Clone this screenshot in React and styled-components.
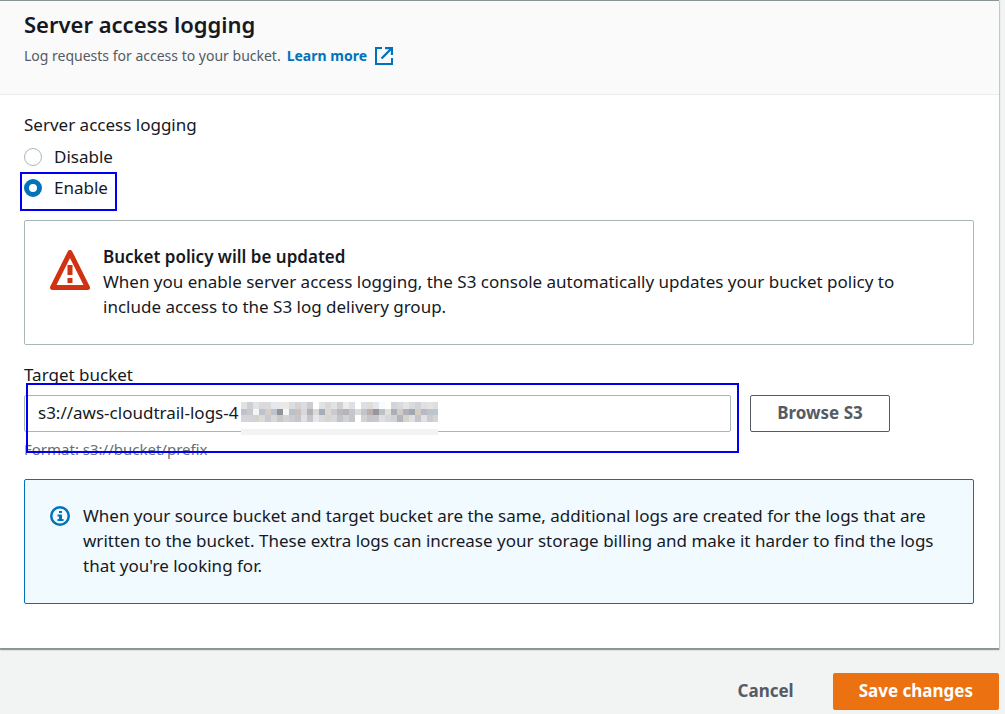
import React, { useState } from 'react';
import styled, { createGlobalStyle, css } from 'styled-components';

const GlobalStyle = createGlobalStyle`
  * {
    box-sizing: border-box;
  }

  body {
    margin: 0;
    background: #f2f3f3;
    color: #16191f;
    font-family: 'Noto Sans', 'Open Sans', sans-serif;
    font-size: 17px;
    line-height: 25px;
  }
`;

const Page = styled.form`
  padding-right: 6px;
`;

const Panel = styled.section`
  background: #fff;
  border-top: 1px solid #879596;
  border-bottom: 1px solid #879596;
  box-shadow: 0 1px 1px 0 rgba(0, 28, 36, 0.3), 1px 1px 1px 0 rgba(0, 28, 36, 0.15);
`;

const PanelHeader = styled.header`
  padding: 7px 24px 27px;
  background: #fafafa;
  border-bottom: 1px solid #eaeded;
`;

const Title = styled.h2`
  margin: 0;
  font-size: 22px;
  font-weight: 600;
  line-height: 32px;
`;

const Description = styled.p`
  display: flex;
  align-items: center;
  gap: 6px;
  margin: 5px 0 0;
  color: #545b64;
  font-size: 14px;
  line-height: 22px;
`;

const LearnMore = styled.a`
  display: inline-flex;
  align-items: center;
  gap: 8px;
  color: #0073bb;
  font-weight: 700;
  text-decoration: none;
`;

const PanelBody = styled.div`
  padding: 17px 25px 44px 24px;
`;

const RadioGroup = styled.fieldset`
  display: flex;
  flex-direction: column;
  align-items: flex-start;
  gap: 6px;
  margin: 0;
  padding: 0;
  border: 0;
`;

const Legend = styled.legend`
  margin-bottom: 7px;
  padding: 0;
`;

/* annotation rectangle drawn over a control */
const highlight = css`
  position: relative;

  &::after {
    content: '';
    position: absolute;
    inset: ${(props) => props.$inset};
    border: 2px solid #0000f0;
    pointer-events: none;
  }
`;

const RadioLabel = styled.label`
  display: flex;
  align-items: center;
  gap: 12px;
  ${(props) => props.$inset && highlight}
`;

const Radio = styled.input`
  appearance: none;
  width: 18px;
  height: 18px;
  margin: 1px 0 0;
  background: #fff;
  border: 1px solid #aab7b8;
  border-radius: 50%;

  &:checked {
    border: 5px solid #0073bb;
  }
`;

const Alert = styled.div`
  display: flex;
  align-items: flex-start;
  gap: 13px;
  margin-top: 20px;
  padding: 23px 25px 25px;
  background: ${(props) => (props.$info ? '#f1faff' : '#fff')};
  border: 1px solid ${(props) => (props.$info ? '#0073bb' : '#aab7b8')};
  border-radius: 2px;

  svg {
    flex: none;
    margin-top: ${(props) => (props.$info ? '3px' : '6px')};
  }

  p {
    margin: 0;
  }
`;

const AlertTitle = styled.div`
  font-weight: 600;
`;

const Field = styled.div`
  margin-top: 17px;
`;

const FieldLabel = styled.label`
  display: block;
  margin-bottom: 8px;
`;

const FieldRow = styled.div`
  display: flex;
  gap: 19px;
  padding-right: 84px;
`;

const InputWrap = styled.div`
  display: flex;
  flex: 1;
  ${highlight}
`;

const TextInput = styled.input`
  flex: 1;
  min-width: 0;
  height: 37px;
  padding: 0 13px 2px;
  background: #fff;
  color: #16191f;
  border: 1px solid #aab7b8;
  border-radius: 2px;
  font: inherit;
`;

const Redaction = styled.svg`
  position: absolute;
  top: 7px;
  left: 217px;
`;

const Hint = styled.div`
  margin-top: 7px;
  color: #687078;
  font-size: 15px;
  line-height: 20px;
`;

const Button = styled.button`
  min-width: 140px;
  height: 37px;
  padding: 0 25px 2px;
  background: ${(props) => (props.$primary ? '#ec7211' : 'transparent')};
  color: ${(props) => (props.$primary ? '#fff' : '#545b64')};
  border: 1px solid ${(props) => (props.$primary ? '#ec7211' : '#545b64')};
  border-radius: 2px;
  font: inherit;
  font-weight: 700;
  white-space: nowrap;
`;

const LinkButton = styled(Button)`
  min-width: 0;
  border-color: transparent;
`;

const Actions = styled.footer`
  display: flex;
  justify-content: flex-end;
  gap: 13px;
  padding: 24px 0 4px;
`;

const ExternalIcon = () => (
  <svg width="18" height="18" viewBox="0 0 18 18" fill="none" stroke="#0073bb" strokeWidth="2">
    <path d="M7 1H1v16h16v-6" />
    <path d="M10 1h7v7M17 1L6.5 11.500" strokeWidth="2.300" />
  </svg>
);

const WarningIcon = () => (
  <svg width="40" height="40" viewBox="0 0 40 40" fill="none">
    <path d="M20 2.500L37.500 37.500H2.500z" stroke="#d13212" strokeWidth="5" strokeLinejoin="round" />
    <path d="M20 15v10M20 28v5" stroke="#d13212" strokeWidth="5" />
  </svg>
);

const InfoIcon = () => (
  <svg width="20" height="20" viewBox="0 0 20 20" fill="none">
    <circle cx="10" cy="10" r="8.750" stroke="#0073bb" strokeWidth="2.500" />
    <path d="M9 5h3v2H9zM7.500 8.500H12V13h1.500v2h-6v-2H9v-2.500H7.500z" fill="#0073bb" />
  </svg>
);

// pixelated account id, one string per row of blocks
const mosaic = [
  'e1e1e3 cfcfd1 e1e3e7 dadadd d9dade e4e8ee e6e8ea ece8e4 dadee1 d4d4d7 dcdce0 cbcbd0 ffffff dfe2e7 dad9d6 e0e2e4 cfcfd4 eeebe9 dde0e5 ffffff dcdfe3 e0dcda e4e8ee f9fbff ffffff d2d4d7 d8dbdd e3e4e8 d9dadd d2d3d6 dfe0e2 e4e3e2 dedee1',
  'c0c1cc c6cacd f5f6f4 bdc1c9 d4cdca c1c3cb 8f949b f6f7f4 bcc1c7 c9c1c0 d7d8dd b5b1b2 dadadc a5aeb7 dcd8d4 c9cbcf b9b9be b4b5bb c5c7cb d9dbdc c3c3c8 b8b0ac 999599 bac2c5 dfe0d9 abadba d1cbc5 b1b2b9 a0a7ae d3cdc6 b6bbc3 bfc4c8 bdc5cf',
  'd4d5d8 d3d4da d7d1ce d9dade c9cacf d9d8d7 c8c8cb d3d2d7 cecccc c5c6cb e0e1e4 c7c7cb e6e8ec d8dadf d9d4d2 d8d8dc c3c4ca d1d2d7 c5c6cb ffffff d3d2d3 c6c5ca c8c8cc dee0e3 d5d7da d1d2d7 b4b5bb d5d2d0 dedfe2 c5c6cb e0e1e4 cbcbcf d3d4d9',
].map((row) => row.split(' '));

const App = () => {
  const [logging, setLogging] = useState('enable');
  const [bucket, setBucket] = useState('s3://aws-cloudtrail-logs-4');

  return (
    <>
      <GlobalStyle />
      <Page onSubmit={(e) => e.preventDefault()}>
        <Panel>
          <PanelHeader>
            <Title>Server access logging</Title>
            <Description>
              Log requests for access to your bucket.
              <LearnMore href="#">
                Learn more
                <ExternalIcon />
              </LearnMore>
            </Description>
          </PanelHeader>
          <PanelBody>
            <RadioGroup>
              <Legend>Server access logging</Legend>
              <RadioLabel>
                <Radio
                  type="radio"
                  name="logging"
                  checked={logging === 'disable'}
                  onChange={() => setLogging('disable')}
                />
                Disable
              </RadioLabel>
              <RadioLabel $inset="-3px -9px -11px -4px">
                <Radio
                  type="radio"
                  name="logging"
                  checked={logging === 'enable'}
                  onChange={() => setLogging('enable')}
                />
                Enable
              </RadioLabel>
            </RadioGroup>

            <Alert>
              <WarningIcon />
              <div>
                <AlertTitle>Bucket policy will be updated</AlertTitle>
                <p>
                  When you enable server access logging, the S3 console automatically updates your bucket policy to
                  include access to the S3 log delivery group.
                </p>
              </div>
            </Alert>

            <Field>
              <FieldLabel htmlFor="bucket">Target bucket</FieldLabel>
              <FieldRow>
                <InputWrap $inset="-12px -8px -21px 2px">
                  <TextInput id="bucket" type="text" value={bucket} onChange={(e) => setBucket(e.target.value)} />
                  <Redaction width="197" height="33" viewBox="0 0 197 33" shapeRendering="crispEdges" aria-hidden="true">
                    <rect width="197" height="20" fill="#fff" />
                    {mosaic.map((row, y) =>
                      row.map((color, x) => (
                        <rect key={`${x}-${y}`} x={x * 6} y={[0, 7, 13][y]} width="6" height="7" fill={`#${color}`} />
                      ))
                    )}
                    <rect y="27" width="197" height="6" fill="#f2f3f3" />
                  </Redaction>
                </InputWrap>
                <Button type="button">Browse S3</Button>
              </FieldRow>
              <Hint>Format: s3://bucket/prefix</Hint>
            </Field>

            <Alert $info>
              <InfoIcon />
              <p>
                When your source bucket and target bucket are the same, additional logs are created for the logs that
                are written to the bucket. These extra logs can increase your storage billing and make it harder to
                find the logs that you're looking for.
              </p>
            </Alert>
          </PanelBody>
        </Panel>
        <Actions>
          <LinkButton type="button">Cancel</LinkButton>
          <Button type="submit" $primary>
            Save changes
          </Button>
        </Actions>
      </Page>
    </>
  );
};

export default App;
